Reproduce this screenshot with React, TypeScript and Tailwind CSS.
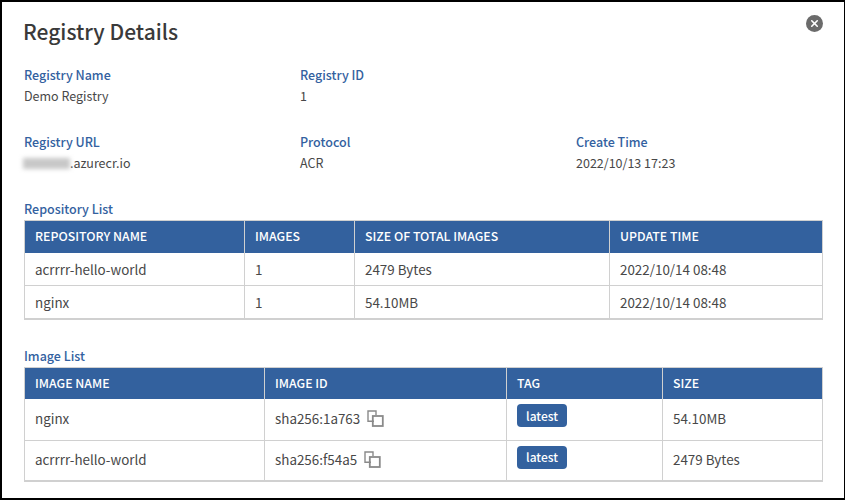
import { X } from "lucide-react";

const repos = [
  { name: "acrrrr-hello-world", images: "1", size: "2479 Bytes", time: "2022/10/14 08:48" },
  { name: "nginx", images: "1", size: "54.10MB", time: "2022/10/14 08:48" },
];

const images = [
  { name: "nginx", id: "sha256:1a763", size: "54.10MB" },
  { name: "acrrrr-hello-world", id: "sha256:f54a5", size: "2479 Bytes" },
];

const th = "border-r border-[#d0d0d0] px-[10px] text-left text-[12.3px] font-medium text-white last:border-r-0";
const td = "border-r border-[#d0d0d0] px-[10px] text-[13.4px] text-[#484848] last:border-r-0";

function Field({ label, children }: { label: string; children: React.ReactNode }) {
  return (
    <div>
      <div className="text-[12.5px] leading-[20px] font-medium text-[#3361a0]">{label}</div>
      <div className="mt-[1px] flex h-[20px] items-center text-[12.5px] text-[#484848]">{children}</div>
    </div>
  );
}

function CopyIcon() {
  return (
    <svg width="17" height="17" viewBox="0 0 17 17" fill="none" stroke="#8a8a8a" strokeWidth="1.4" className="ml-[7px]">
      <path d="M7 11.3H1V1H9V5" />
      <rect x="5.8" y="6" width="10" height="10" strokeWidth="1.8" />
    </svg>
  );
}

export default function App() {
  return (
    <div className="relative h-[500px] w-[845px] overflow-hidden border-t-2 border-r border-b-2 border-l-2 border-black bg-white px-[22px] font-['Noto_Sans_CJK_SC','Noto_Sans',sans-serif]">
      <button className="absolute top-[13px] right-[21px] flex h-[17px] w-[17px] items-center justify-center rounded-full bg-[#6b6b6b]">
        <X size={11} strokeWidth={3.5} color="#fff" />
      </button>

      <h1 className="ml-[-1px] pt-[12px] text-[21px] leading-[34px] font-medium text-[#3a3a3a]">Registry Details</h1>

      <div className="mt-[17px] grid grid-cols-[276px_276px_1fr] gap-y-[26px]">
        <Field label="Registry Name">Demo Registry</Field>
        <Field label="Registry ID">1</Field>
        <div />
        <Field label="Registry URL">
          <span className="ml-[-1px] h-[11px] w-[47px] bg-[#c8c8c8] blur-[2px]" />
          <span>.azurecr.io</span>
        </Field>
        <Field label="Protocol">ACR</Field>
        <Field label="Create Time">2022/10/13 17:23</Field>
      </div>

      <div className="mt-[26px] text-[12.5px] leading-[20px] font-medium text-[#3361a0]">Repository List</div>
      <table className="mt-[1px] w-[798px] table-fixed border-collapse border border-b-2 border-[#d0d0d0]">
        <colgroup>
          <col className="w-[220px]" />
          <col className="w-[110px]" />
          <col className="w-[255px]" />
          <col className="w-[213px]" />
        </colgroup>
        <thead className="bg-[#33619e]">
          <tr className="h-[32px]">
            <th className={th + " pb-[2px]"}>REPOSITORY NAME</th>
            <th className={th + " pb-[2px]"}>IMAGES</th>
            <th className={th + " pb-[2px]"}>SIZE OF TOTAL IMAGES</th>
            <th className={th + " pb-[2px]"}>UPDATE TIME</th>
          </tr>
        </thead>
        <tbody>
          {repos.map((r) => (
            <tr key={r.name} className="h-[33px] border-b border-[#d0d0d0] last:border-b-0">
              <td className={td}>{r.name}</td>
              <td className={td}>{r.images}</td>
              <td className={td}>{r.size}</td>
              <td className={td}>{r.time}</td>
            </tr>
          ))}
        </tbody>
      </table>

      <div className="mt-[26px] text-[12.5px] leading-[20px] font-medium text-[#3361a0]">Image List</div>
      <table className="mt-[1px] w-[798px] table-fixed border-collapse border border-b-2 border-[#d0d0d0]">
        <colgroup>
          <col className="w-[240px]" />
          <col className="w-[242px]" />
          <col className="w-[156px]" />
          <col className="w-[160px]" />
        </colgroup>
        <thead className="bg-[#33619e]">
          <tr className="h-[32px]">
            <th className={th}>IMAGE NAME</th>
            <th className={th}>IMAGE ID</th>
            <th className={th}>TAG</th>
            <th className={th}>SIZE</th>
          </tr>
        </thead>
        <tbody>
          {images.map((r) => (
            <tr key={r.name} className="h-[41px] border-b border-[#d0d0d0] last:border-b-0">
              <td className={td + " pb-[2px]"}>{r.name}</td>
              <td className={td + " pb-[2px]"}>
                <div className="flex items-center">
                  {r.id}
                  <CopyIcon />
                </div>
              </td>
              <td className={td + " pt-[5px] align-top"}>
                <span className="flex h-[23px] w-[50px] items-center justify-center rounded-[4px] bg-[#33619e] text-[12px] font-medium text-white">latest</span>
              </td>
              <td className={td + " pb-[2px]"}>{r.size}</td>
            </tr>
          ))}
        </tbody>
      </table>
    </div>
  );
}
